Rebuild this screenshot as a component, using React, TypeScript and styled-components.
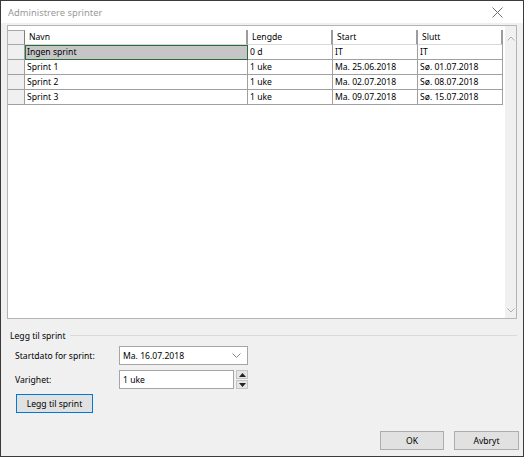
import React from "react";
import styled, { createGlobalStyle } from "styled-components";

type Sprint = {
  name: string;
  length: string;
  start: string;
  end: string;
};

const sprints: Sprint[] = [
  { name: "Ingen sprint", length: "0 d", start: "IT", end: "IT" },
  { name: "Sprint 1", length: "1 uke", start: "Ma. 25.06.2018", end: "Sø. 01.07.2018" },
  { name: "Sprint 2", length: "1 uke", start: "Ma. 02.07.2018", end: "Sø. 08.07.2018" },
  { name: "Sprint 3", length: "1 uke", start: "Ma. 09.07.2018", end: "Sø. 15.07.2018" },
];

const columns = ["Navn", "Lengde", "Start", "Slutt"];

const GlobalStyle = createGlobalStyle`
  html, body {
    margin: 0;
    padding: 0;
    background: #f0f0f0;
  }
  * {
    box-sizing: border-box;
  }
`;

export default function App() {
  return (
    <>
      <GlobalStyle />
      <Window>
        <TitleBar>
          <Title>Administrere sprinter</Title>
          <CloseButton>
            <svg width="11" height="11" viewBox="0 0 11 11">
              <path d="M0.5 0.5 L10.5 10.5 M10.5 0.5 L0.5 10.5" stroke="#6e6e6e" strokeWidth="1" />
            </svg>
          </CloseButton>
        </TitleBar>

        <Body>
          <GridFrame>
            <Table>
              <CornerCell />
              {columns.map((c) => (
                <HeaderCell key={c}>{c}</HeaderCell>
              ))}
              {sprints.map((s, i) => (
                <React.Fragment key={s.name}>
                  <RowHeader />
                  <Cell $selected={i === 0}>{s.name}</Cell>
                  <Cell>{s.length}</Cell>
                  <Cell>{s.start}</Cell>
                  <Cell>{s.end}</Cell>
                </React.Fragment>
              ))}
            </Table>
            <ScrollBar>
              <svg width="8" height="5" viewBox="0 0 8 5">
                <path d="M0.5 4.5 L4 1 L7.5 4.5" stroke="#b0b0b0" fill="none" />
              </svg>
              <svg width="8" height="5" viewBox="0 0 8 5">
                <path d="M0.5 0.5 L4 4 L7.5 0.5" stroke="#b0b0b0" fill="none" />
              </svg>
            </ScrollBar>
          </GridFrame>

          <Group>
            <GroupHeader>
              <GroupTitle>Legg til sprint</GroupTitle>
              <GroupRule />
            </GroupHeader>
            <Form>
              <FieldLabel>Startdato for sprint:</FieldLabel>
              <Combo>
                <span>Ma. 16.07.2018</span>
                <svg width="9" height="5" viewBox="0 0 9 5">
                  <path d="M0.5 0.5 L4.5 4.5 L8.5 0.5" stroke="#8a8a8a" fill="none" />
                </svg>
              </Combo>
              <FieldLabel>Varighet:</FieldLabel>
              <SpinRow>
                <SpinInput>1 uke</SpinInput>
                <SpinButtons>
                  <SpinButton>
                    <svg width="7" height="4" viewBox="0 0 7 4">
                      <path d="M0 4 L3.5 0 L7 4 Z" fill="#222" />
                    </svg>
                  </SpinButton>
                  <SpinButton>
                    <svg width="7" height="4" viewBox="0 0 7 4">
                      <path d="M0 0 L3.5 4 L7 0 Z" fill="#222" />
                    </svg>
                  </SpinButton>
                </SpinButtons>
              </SpinRow>
            </Form>
            <Button $default>Legg til sprint</Button>
          </Group>

          <Footer>
            <FooterButton $width={64}>OK</FooterButton>
            <FooterButton $width={65}>Avbryt</FooterButton>
          </Footer>
        </Body>
      </Window>
    </>
  );
}

const Window = styled.div`
  width: 524px;
  height: 457px;
  border: 1px solid #3a3a3a;
  background: #f0f0f0;
  display: flex;
  flex-direction: column;
  font-family: "Noto Sans", "Open Sans", sans-serif;
  font-size: 8.6px;
  color: #000;
`;

const TitleBar = styled.div`
  height: 22px;
  background: #fff;
  display: flex;
  align-items: center;
  justify-content: space-between;
  padding: 0 20px 0 7px;
`;

const Title = styled.span`
  font-size: 9.4px;
  color: #9a9a9a;
`;

const CloseButton = styled.span`
  display: flex;
  align-items: center;
`;

const Body = styled.div`
  flex: 1;
  display: flex;
  flex-direction: column;
  padding: 2px 6px 0 6px;
`;

const GridFrame = styled.div`
  height: 294px;
  border: 1px solid #b4b4b4;
  background: #fff;
  display: flex;
  justify-content: space-between;
`;

const Table = styled.div`
  display: grid;
  grid-template-columns: 17px 223px 85px 85px 85px;
  grid-auto-rows: 15px;
  align-content: start;
  padding-top: 4px;
`;

const CornerCell = styled.div`
  background: #f0f0f0;
  border: 1px solid #a8a8a8;
  border-left: none;
  border-right: 1px solid #7d7d7d;
`;

const HeaderCell = styled.div`
  background: #fff;
  border-bottom: 1px solid #d8d8d8;
  border-right: 2px solid #9c9c9c;
  padding-left: 4px;
  display: flex;
  align-items: center;
  white-space: nowrap;
`;

const RowHeader = styled.div`
  background: #f0f0f0;
  border-right: 1px solid #a0a0a0;
  border-bottom: 1px solid #a0a0a0;
`;

const Cell = styled.div<{ $selected?: boolean }>`
  background: ${(p) => (p.$selected ? "#c6c6c6" : "#fff")};
  border-right: 1px solid #a0a0a0;
  border-bottom: 1px solid #a0a0a0;
  outline: ${(p) => (p.$selected ? "1px solid #2b6e3c" : "none")};
  outline-offset: -1px;
  padding-left: 2px;
  display: flex;
  align-items: center;
  white-space: nowrap;
`;

const ScrollBar = styled.div`
  width: 11px;
  background: #f0f0f0;
  display: flex;
  flex-direction: column;
  justify-content: space-between;
  align-items: center;
  padding: 10px 0 5px;
`;

const Group = styled.div`
  display: flex;
  flex-direction: column;
  padding-top: 10px;
`;

const GroupHeader = styled.div`
  display: flex;
  align-items: center;
  gap: 4px;
  height: 14px;
  padding-left: 3px;
`;

const GroupTitle = styled.span`
  white-space: nowrap;
`;

const GroupRule = styled.div`
  flex: 1;
  height: 1px;
  background: #dadada;
  margin-top: -2px;
`;

const Form = styled.div`
  display: grid;
  grid-template-columns: 104px 129px;
  grid-auto-rows: 19px;
  row-gap: 5px;
  align-items: center;
  padding: 3px 0 0 8px;
`;

const FieldLabel = styled.span`
  white-space: nowrap;
`;

const Combo = styled.div`
  height: 19px;
  background: #fff;
  border: 1px solid #a5a5a5;
  display: flex;
  align-items: center;
  justify-content: space-between;
  padding: 0 6px 0 3px;
`;

const SpinRow = styled.div`
  display: flex;
  gap: 2px;
  height: 19px;
`;

const SpinInput = styled.div`
  flex: 1;
  background: #fff;
  border: 1px solid #a5a5a5;
  display: flex;
  align-items: center;
  padding-left: 3px;
`;

const SpinButtons = styled.div`
  width: 12px;
  display: flex;
  flex-direction: column;
  gap: 1px;
`;

const SpinButton = styled.div`
  flex: 1;
  background: #e5e5e5;
  border: 1px solid #c4c4c4;
  display: flex;
  align-items: center;
  justify-content: center;
`;

const Button = styled.div<{ $default?: boolean }>`
  margin: 5px 0 0 9px;
  width: 77px;
  height: 19px;
  background: #e1e1e1;
  border: 1px solid ${(p) => (p.$default ? "#0078d7" : "#adadad")};
  display: flex;
  align-items: center;
  justify-content: center;
`;

const Footer = styled.div`
  margin-top: auto;
  display: flex;
  justify-content: flex-end;
  gap: 10px;
  padding: 0 0 6px;
  margin-right: -2px;
`;

const FooterButton = styled.div<{ $width: number }>`
  width: ${(p) => p.$width}px;
  height: 19px;
  background: #e1e1e1;
  border: 1px solid #adadad;
  display: flex;
  align-items: center;
  justify-content: center;
`;
